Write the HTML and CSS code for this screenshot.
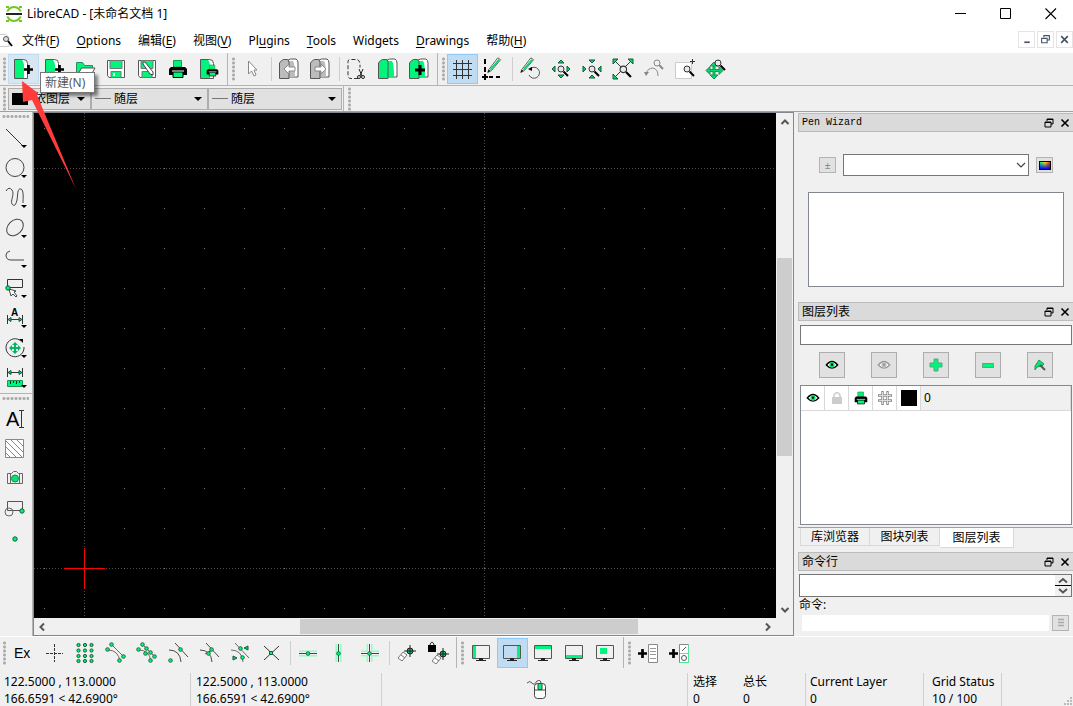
FILE: index.html
```html
<!DOCTYPE html>
<html lang="zh-CN">
<head>
<meta charset="utf-8">
<title>LibreCAD - [未命名文档 1]</title>
<link rel="stylesheet" href="styles.css">
</head>
<body>
<svg class="defs" aria-hidden="true">
  <defs>
    <symbol id="plus" viewBox="0 0 10 10"><path d="M3.500 0h3v3.500H10v3H6.500V10h-3V6.500H0v-3h3.500z"/></symbol>
    <symbol id="page" viewBox="0 0 24 24"><path d="M3.500 2.500h9q4 0 4 4v15h-13z" fill="#fff" stroke="#555"/><path d="M4 3h7q2 2 2 5v13H4z" fill="#00f57a"/></symbol>
    <symbol id="new" viewBox="0 0 24 24"><use href="#page" width="24" height="24"/><use href="#plus" x="13" y="8" width="9" height="9"/></symbol>
    <symbol id="lens" viewBox="0 0 12 12"><path d="M6.500 6.500l4.500 4.500" stroke="#000" stroke-width="2"/><circle cx="4" cy="4" r="3" fill="#e8e8e8" stroke="#333"/></symbol>
    <symbol id="pencil" viewBox="0 0 24 24"><path d="M4 15L14 2l3 2L7 16l-4 2z" fill="#fff" stroke="#555"/><path d="M6 15L15.500 4" stroke="#00d870" stroke-width="2"/><path d="M3 18l1-3 2 1z"/></symbol>
    <symbol id="eye" viewBox="0 0 16 12"><path d="M1.500 6q6.500-8 13 0q-6.500 7-13 0z" fill="#fff" stroke="currentColor" stroke-width="1.500"/><circle cx="8" cy="5.700" r="3" class="iris"/><circle cx="8" cy="5.700" r="1.300" fill="currentColor"/></symbol>
    <symbol id="printer" viewBox="0 0 20 20"><path d="M5.500 8V1.500h8V8z" fill="#00f57a" stroke="#159958"/><path d="M3 8h14l2 2v6H1v-6z"/><path d="M5 13h10v5.500H5z" fill="#00f57a" stroke="#000"/><path d="M4 12h12" stroke="#fff"/></symbol>
    <symbol id="monitor" viewBox="0 0 24 24"><path d="M3.500 4.500h17v13h-17z" fill="none" stroke="#555"/><path d="M10 17h4v2h3v1H7v-1h3z" fill="#222"/></symbol>
    <symbol id="floaticon" viewBox="0 0 10 10"><path d="M3 3V1h6v5H7M1 4h6v5H1zM1 4.500h6M3 1.500h6" fill="none" stroke="#000"/></symbol>
    <symbol id="closeicon" viewBox="0 0 10 10"><path d="M1.500 1.500l7 7m0-7l-7 7" stroke="#000" stroke-width="1.600"/></symbol>
    <symbol id="lib" viewBox="0 0 24 24"><path d="M9 4q4-3 10-2 2 1 2 4v14h-9z" fill="#fff" stroke="#555"/><path d="M12 4h4q2 2 2 16h-6z" class="cover"/><path d="M2.500 6q2-3 4-3.500H10q2 0 2 3v16H2.500z" class="cover" stroke="#555"/></symbol>
    <symbol id="dot" viewBox="0 0 6 6"><circle cx="3" cy="3" r="2.200" fill="#00f57a" stroke="#145c38"/></symbol>
    <symbol id="mag" viewBox="0 0 12 12"><path d="M1 9l5-6 4 3-5 6z" fill="#fff" stroke="#777"/><path d="M4 6l4 3" stroke="#777"/></symbol>
    <symbol id="snapmark" viewBox="0 0 12 12"><circle cx="6" cy="6" r="3" fill="#00c46a" stroke="#222"/><path d="M6 0v12M0 6h12" stroke="#222"/></symbol>
  </defs>
</svg>

<div class="window">
  <header class="titlebar">
    <svg class="logo" viewBox="0 0 18 18"><circle cx="9" cy="9" r="7" fill="none" stroke="#72c81e" stroke-width="2"/><path d="M1 9h16" stroke="#fff" stroke-width="5"/><path d="M1 9h16" stroke="#222" stroke-width="2"/><path d="M1 1h3v2H1zm13 0h3v2h-3zM1 15h3v2H1zm13 0h3v2h-3z" fill="#72c81e"/></svg>
    <h1>LibreCAD - [未命名文档 1]</h1>
    <div class="wincontrols">
      <button aria-label="最小化"><svg viewBox="0 0 12 12"><path d="M0 5.500h11" stroke="#000"/></svg></button>
      <button aria-label="最大化"><svg viewBox="0 0 12 12"><path d="M.5.500h10v10H.5z" fill="none" stroke="#000"/></svg></button>
      <button aria-label="关闭"><svg viewBox="0 0 12 12"><path d="M.5.500l10.500 10.500m0-10.500L.5 11" stroke="#000" stroke-width="1.100"/></svg></button>
    </div>
  </header>

  <nav class="menubar">
    <svg class="docicon" viewBox="0 0 14 16"><path d="M0 1.500h6l3 3v9H0" fill="#fff" stroke="#ccc"/><circle cx="6" cy="6" r="2.500" fill="#ddd" stroke="#555"/><path d="M8 8l4 5" stroke="#000" stroke-width="2"/></svg>
    <button>文件(<u>F</u>)</button><button><u>O</u>ptions</button><button>编辑(<u>E</u>)</button><button>视图(<u>V</u>)</button><button>Pl<u>u</u>gins</button><button><u>T</u>ools</button><button>Widgets</button><button><u>D</u>rawings</button><button>帮助(<u>H</u>)</button>
    <div class="mdi">
      <button aria-label="最小化文档"><svg viewBox="0 0 10 10"><path d="M3 7.500h5" stroke="#456" stroke-width="1.500"/></svg></button>
      <button aria-label="还原文档"><svg viewBox="0 0 10 10"><path d="M3.500 3V1.500h5v4H7M1.500 4h5v4h-5z" fill="none" stroke="#456"/></svg></button>
      <button aria-label="关闭文档"><svg viewBox="0 0 10 10"><path d="M2 2l6 6m0-6L2 8" stroke="#456" stroke-width="1.500"/></svg></button>
    </div>
  </nav>

  <div class="toolbar main-tools">
    <i class="grip"></i>
    <div class="newwrap">
      <button class="tool hover" aria-label="新建"><svg viewBox="0 0 24 24"><use href="#new"/></svg></button>
      <div class="tooltip" role="tooltip">新建(N)</div>
      <svg class="pointer-arrow" viewBox="0 0 56 110"><path d="M0 0L16 12l-1 2L54 108 10 19 1 21z" fill="#ff3b3b"/></svg>
    </div>
    <button class="tool" aria-label="从模板新建"><svg viewBox="0 0 24 24"><use href="#new"/></svg></button>
    <button class="tool" aria-label="打开"><svg viewBox="0 0 24 24"><path d="M3.500 20V5.500h6l2 3h8V11" fill="#00f57a" stroke="#2a8a5a"/><path d="M3.500 20l5-9H22l-5 9z" fill="#fff" stroke="#555"/></svg></button>
    <button class="tool" aria-label="保存"><svg viewBox="0 0 24 24"><path d="M3.500 3.500h17v17H5l-1.500-2z" fill="#fff" stroke="#555"/><path d="M6 3.500h12v8H6z" fill="#00f57a" stroke="#777"/><path d="M7 14.500h10v6H7z" fill="#00f57a" stroke="#777"/><path d="M9 16h2v3H9z" fill="#fff"/></svg></button>
    <button class="tool" aria-label="另存为"><svg viewBox="0 0 24 24"><path d="M3.500 3.500h17v17H5l-1.500-2z" fill="#fff" stroke="#555"/><path d="M6 3.500h12v8H6zM7 14.500h10v6H7z" fill="#00f57a" stroke="#777"/><path d="M8 5l2 0 8 10v3l-3-1L8 7z" fill="#fff" stroke="#444"/></svg></button>
    <button class="tool" aria-label="打印"><svg viewBox="0 0 24 24"><use href="#printer" x="2" y="2" width="20" height="20"/></svg></button>
    <button class="tool" aria-label="打印预览"><svg viewBox="0 0 24 24"><use href="#page"/><use href="#printer" x="9" y="7" width="13" height="13"/></svg></button>
    <i class="edge"></i><i class="grip"></i>
    <button class="tool" aria-label="选择"><svg viewBox="0 0 24 24"><path d="M8.500 4v13l3-3 2.500 5 2-1-2-5h3z" fill="#fff" stroke="#888"/></svg></button>
    <i class="sep"></i>
    <button class="tool muted" aria-label="撤销"><svg viewBox="0 0 24 24"><use href="#lib"/><path d="M7 12l5-5v3h6v4h-6v3z" fill="#fff" stroke="#888"/></svg></button>
    <button class="tool muted" aria-label="重做"><svg viewBox="0 0 24 24"><use href="#lib"/><path d="M18 12l-5-5v3H7v4h6v3z" fill="#fff" stroke="#888"/></svg></button>
    <i class="sep"></i>
    <button class="tool" aria-label="剪切"><svg viewBox="0 0 24 24"><path d="M13 21.500H6q-3 0-3-3v-14q0-2 2-2h7q3 1 3 5v3" fill="none" stroke="#333" stroke-dasharray="4 2"/><path d="M14 12l3 7m1-7l-3 7" stroke="#222"/><circle cx="14" cy="20" r="1.500" fill="none" stroke="#222"/><circle cx="18" cy="20" r="1.500" fill="none" stroke="#222"/></svg></button>
    <button class="tool" aria-label="复制"><svg viewBox="0 0 24 24"><use href="#lib"/></svg></button>
    <button class="tool" aria-label="粘贴"><svg viewBox="0 0 24 24"><use href="#lib"/><use href="#plus" x="8" y="8" width="10" height="10"/></svg></button>
    <i class="edge"></i><i class="grip"></i>
    <button class="tool on" aria-label="网格"><svg viewBox="0 0 24 24"><path d="M6.500 3v19m6-19v19m6-19v19M3 6.500h19m-19 6h19m-19 6h19" stroke="#333"/></svg></button>
    <button class="tool" aria-label="草图模式"><svg viewBox="0 0 24 24"><path d="M4 2v14" stroke="#000" stroke-width="2" stroke-dasharray="5 3"/><path d="M8 20h14" stroke="#000" stroke-width="2" stroke-dasharray="4 3"/><path d="M4 17v6m-3-3h6" stroke="#000" stroke-width="2"/><use href="#pencil" x="4" y="-1" width="22" height="22"/></svg></button>
    <i class="sep"></i>
    <button class="tool" aria-label="重绘"><svg viewBox="0 0 24 24"><path d="M12 12a5.500 5.500 0 1 1-1 6" fill="none" stroke="#555"/><path d="M10 12l4-2v4z"/><use href="#pencil" y="-1" width="22" height="22"/></svg></button>
    <button class="tool" aria-label="放大"><svg viewBox="0 0 24 24"><path d="M12 3l3 3H9zM12 21l-3-3h6zM3 12l3-3v6zM21 12l-3-3v6z" class="gr"/><use href="#lens" x="8" y="8" width="12" height="12"/></svg></button>
    <button class="tool" aria-label="缩小"><svg viewBox="0 0 24 24"><path d="M12 6l3-3H9zM12 18l-3 3h6zM6 12L3 9v6zM18 12l3-3v6z" class="gr"/><use href="#lens" x="8" y="8" width="12" height="12"/></svg></button>
    <button class="tool" aria-label="自动缩放"><svg viewBox="0 0 24 24"><path d="M4 4l16 16M20 4L4 20" stroke="#333"/><path d="M2 2h5L2 7zM22 2v5l-5-5zM2 22v-5l5 5z" class="gr"/><use href="#lens" x="8" y="8" width="13" height="13"/></svg></button>
    <button class="tool" aria-label="上一视图"><svg viewBox="0 0 24 24"><path d="M4 18q1-7 7-7 5 1 5 8" fill="none" stroke="#888"/><path d="M2 15h5l-3 4z" fill="#888"/><circle cx="15" cy="6" r="3" fill="none" stroke="#888"/><path d="M17 8l4 4" stroke="#888" stroke-width="2"/></svg></button>
    <button class="tool" aria-label="窗口缩放"><svg viewBox="0 0 24 24"><path d="M2.500 5.500h16v16h-16z" fill="#fff" stroke="#ccc"/><use href="#lens" x="10" y="8" width="12" height="12"/><path d="M19.500 2v5m-2.500-2.500h5" stroke="#333"/></svg></button>
    <button class="tool" aria-label="平移"><svg viewBox="0 0 24 24"><path d="M10 6v15M3 13.500h15" stroke="#159958" stroke-width="3"/><path d="M10 5l4 4H6zM10 22l-4-4h8zM2 13.500l4-4v8zM19 13.500l-4-4v8z" fill="#00d870" stroke="#228855"/><path d="M10 7v13M4 13.500h12" stroke="#00d870"/><use href="#lens" x="10" y="2" width="12" height="12"/></svg></button>
  </div>

  <div class="toolbar pen-tools">
    <i class="grip"></i>
    <label class="combo pen-color"><select aria-label="颜色"><option>依图层</option></select></label>
    <label class="combo pen-width"><select aria-label="线宽"><option>随层</option></select></label>
    <label class="combo pen-type"><select aria-label="线型"><option>随层</option></select></label>
    <i class="edge"></i><i class="grip"></i>
  </div>

  <main class="workspace">
    <aside class="sidebar">
      <i class="hgrip"></i>
      <button class="side menu" aria-label="直线"><svg viewBox="0 0 24 24"><path d="M3 3l17 17" stroke="#333"/></svg></button>
      <button class="side menu" aria-label="圆"><svg viewBox="0 0 24 24"><circle cx="12" cy="11.500" r="9" fill="none" stroke="#444"/></svg></button>
      <button class="side menu" aria-label="曲线"><svg viewBox="0 0 24 24"><path d="M3 5q3-5 6-1c3 4-2 11 0 14s4 1 5-4 0-12 4-11c3 1 2 10 2 14" fill="none" stroke="#444"/></svg></button>
      <button class="side menu" aria-label="椭圆"><svg viewBox="0 0 24 24"><ellipse cx="12" cy="11.500" rx="9.500" ry="7" transform="rotate(-45 12 11.500)" fill="none" stroke="#444"/></svg></button>
      <button class="side menu" aria-label="多段线"><svg viewBox="0 0 24 24"><path d="M7 5Q3 6 3 9q0 5 5 5h13" fill="none" stroke="#444"/></svg></button>
      <button class="side menu" aria-label="选择"><svg viewBox="0 0 24 24"><path d="M4.500 3.500h15v8h-15z" fill="none" stroke="#333"/><path d="M6 13l2 7 2-2 3 3 1-1-3-4 2-1z" fill="#fff" stroke="#444"/><use href="#dot" x="2" y="9" width="6" height="6"/></svg></button>
      <button class="side menu" aria-label="标注"><svg viewBox="0 0 24 24"><text x="8" y="10" class="dimtext">A</text><path d="M4.500 9v9m15-9v9M6 13.500h12" stroke="#333"/><path d="M5 13.500l3-2v4zM19 13.500l-3-2v4z" class="gr"/></svg></button>
      <button class="side menu" aria-label="修改"><svg viewBox="0 0 24 24"><path d="M18 5A9 9 0 1 0 21 11" fill="none" stroke="#333"/><path d="M16 3l4 0v4z"/><path d="M12 8v8m-4-4h8" stroke="#00b863" stroke-width="2"/><path d="M12 6l3 3H9zM12 18l-3-3h6zM6 12l3-3v6zM18 12l-3-3v6z" fill="#00b863"/></svg></button>
      <button class="side menu" aria-label="测量"><svg viewBox="0 0 24 24"><path d="M4.500 2v9m15-9v9M6 6.500h12" stroke="#333"/><path d="M5 6.500l3-2v4zM19 6.500l-3-2v4z" class="gr"/><path d="M4.500 14.500h15v6h-15z" fill="#00f57a" stroke="#159958"/><path d="M7.500 15v3m3-3v2m3-2v3m3-3v2" stroke="#222"/></svg></button>
      <i class="hedge"></i><i class="hgrip short"></i>
      <button class="side" aria-label="多行文本"><svg viewBox="0 0 24 24"><text x="3" y="19" class="mtext">A</text><path d="M16 3.500h5m-5 17h5m-2.500-17v17" fill="none" stroke="#333"/></svg></button>
      <button class="side" aria-label="填充"><svg viewBox="0 0 24 24"><path d="M2.500 2.500h18v18h-18z" fill="#fff" stroke="#888"/><path d="M8 3l12 12M14 3l6 6M3 4l16 16M3 10l10 10M3 16l4 4" stroke="#888"/></svg></button>
      <button class="side" aria-label="图像"><svg viewBox="0 0 24 24"><path d="M4.500 6.500h4l2-2h3l2 2h4v10h-15zM7.500 7v9m9-9v9" fill="none" stroke="#666"/><circle cx="12" cy="11.500" r="3.500" fill="#00e873" stroke="#178552"/></svg></button>
      <button class="side" aria-label="创建块"><svg viewBox="0 0 24 24"><path d="M4.500 4.500h15v9h-15z" fill="none" stroke="#555"/><circle cx="6" cy="15" r="4" fill="none" stroke="#666"/><use href="#dot" x="16" y="11" width="6" height="6"/></svg></button>
      <button class="side" aria-label="点"><svg viewBox="0 0 24 24"><use href="#dot" x="9" y="9" width="6" height="6"/></svg></button>
    </aside>

    <section class="viewport">
      <svg class="drawing" aria-label="绘图区">
        <defs>
          <pattern id="points" width="40" height="40" patternUnits="userSpaceOnUse"><path d="M10 15h1v1h-1z" fill="#777"/></pattern>
          <pattern id="meta" width="400" height="400" patternUnits="userSpaceOnUse"><path d="M50.500 0v400M0 55.500h400" stroke="#4a4a4a" stroke-dasharray="1 2"/></pattern>
        </defs>
        <rect width="100%" height="100%" fill="#000"/>
        <rect width="100%" height="100%" fill="url(#meta)"/>
        <rect width="100%" height="100%" fill="url(#points)"/>
        <path d="M30 455.500h41M50.500 435v41" stroke="#f00"/>
      </svg>
      <div class="vscroll">
        <button aria-label="向上"><svg viewBox="0 0 10 10"><path d="M1.500 7L5 3.500 8.500 7" class="chev"/></svg></button>
        <i class="before"></i><i class="thumb"></i><i class="after"></i>
        <button aria-label="向下"><svg viewBox="0 0 10 10"><path d="M1.500 3L5 6.500 8.500 3" class="chev"/></svg></button>
      </div>
      <div class="hscroll">
        <button aria-label="向左"><svg viewBox="0 0 10 10"><path d="M7 1.500L3.500 5 7 8.500" class="chev"/></svg></button>
        <i class="before"></i><i class="thumb"></i><i class="after"></i>
        <button aria-label="向右"><svg viewBox="0 0 10 10"><path d="M3 1.500L6.500 5 3 8.500" class="chev"/></svg></button>
      </div>
    </section>

    <aside class="docks">
      <section class="dock pen-wizard">
        <header><h2 class="mono">Pen Wizard</h2><button aria-label="浮动"><svg viewBox="0 0 10 10"><use href="#floaticon"/></svg></button><button aria-label="关闭"><svg viewBox="0 0 10 10"><use href="#closeicon"/></svg></button></header>
        <div class="wizard-row">
          <button class="mini" aria-label="添加">±</button>
          <label class="wizard-combo"><select aria-label="收藏颜色"><option></option></select><svg viewBox="0 0 10 10"><path d="M1 3l4 4 4-4" fill="none" stroke="#444" stroke-width="1.200"/></svg></label>
          <button class="mini" aria-label="选择颜色"><i class="spectrum"></i></button>
        </div>
        <div class="swatches"></div>
      </section>

      <section class="dock layers">
        <header><h2>图层列表</h2><button aria-label="浮动"><svg viewBox="0 0 10 10"><use href="#floaticon"/></svg></button><button aria-label="关闭"><svg viewBox="0 0 10 10"><use href="#closeicon"/></svg></button></header>
        <input class="filter" type="text" aria-label="图层过滤">
        <div class="layer-actions">
          <button aria-label="全部显示"><svg viewBox="0 0 16 16"><use href="#eye" x="1" y="2" width="14" height="12"/></svg></button>
          <button class="muted" aria-label="全部隐藏"><svg viewBox="0 0 16 16"><use href="#eye" x="1" y="2" width="14" height="12"/></svg></button>
          <button aria-label="添加图层"><svg viewBox="0 0 16 16"><path d="M6 2h4v4h4v4h-4v4H6v-4H2V6h4z" fill="#00f57a" stroke="#55a87f"/></svg></button>
          <button aria-label="删除图层"><svg viewBox="0 0 16 16"><path d="M2.500 6.500h11v4h-11z" fill="#00f57a" stroke="#55a87f"/></svg></button>
          <button aria-label="修改图层"><svg viewBox="0 0 16 16"><path d="M3 9l4-6 5 4-2 2-5 1-2 3z" fill="#00e873" stroke="#368a60"/><path d="M8 8l5 5" stroke="#555" stroke-width="2"/></svg></button>
        </div>
        <div class="layer-list">
          <table><tbody><tr>
            <td><svg viewBox="0 0 16 16"><use href="#eye" x="1" y="2" width="14" height="12"/></svg></td>
            <td><svg viewBox="0 0 16 16"><path d="M5 8V5q3-5 6 0v3" fill="none" stroke="#ccc" stroke-width="1.500"/><path d="M3 7h10v7H3z" fill="#ccc"/></svg></td>
            <td><svg viewBox="0 0 16 16"><use href="#printer" x="1" y="1" width="14" height="14"/></svg></td>
            <td><svg viewBox="0 0 16 16"><path d="M5.500 1v14m5-14v14M1 5.500h14m-14 5h14" stroke="#888" stroke-width="2.400"/><path d="M5.500 2v12m5-12v12M2 5.500h12m-12 5h12" stroke="#ddd"/></svg></td>
            <td><svg viewBox="0 0 16 16"><path d="M0 0h16v16H0z"/></svg></td>
            <td class="layer-name">0</td>
          </tr></tbody></table>
        </div>
        <div class="tabs" role="tablist">
          <button role="tab">库浏览器</button><button role="tab">图块列表</button><button role="tab" class="active" aria-selected="true">图层列表</button>
        </div>
      </section>

      <section class="dock command">
        <header><h2>命令行</h2><button aria-label="浮动"><svg viewBox="0 0 10 10"><use href="#floaticon"/></svg></button><button aria-label="关闭"><svg viewBox="0 0 10 10"><use href="#closeicon"/></svg></button></header>
        <div class="history">
          <textarea aria-label="命令历史" readonly></textarea>
          <div class="spin"><button aria-label="向上"><svg viewBox="0 0 10 10"><path d="M1 7.500L5 4l4 3.500" class="chev"/></svg></button><button aria-label="向下"><svg viewBox="0 0 10 10"><path d="M1 3l4 3.500L9 3" class="chev"/></svg></button></div>
        </div>
        <label for="cmd">命令:</label>
        <div class="cmd-row"><input id="cmd" type="text"><button class="mini" aria-label="选项"><svg viewBox="0 0 10 10"><path d="M2 1.500h6m-6 3h6m-6 3h6" stroke="#aaa" stroke-width="1.500"/></svg></button></div>
      </section>
    </aside>
  </main>

  <div class="toolbar snap-tools">
    <i class="grip"></i>
    <button class="tool ex">Ex</button>
    <button class="tool" aria-label="自由捕捉"><svg viewBox="0 0 24 24"><path d="M12.500 3v18M4 12.500h17" stroke="#333" stroke-dasharray="3 1"/></svg></button>
    <button class="tool" aria-label="捕捉网格"><svg viewBox="0 0 24 24"><g fill="#00f57a" stroke="#145c38"><circle cx="5.500" cy="4" r="1.600"/><circle cx="12" cy="4" r="1.600"/><circle cx="18.500" cy="4" r="1.600"/><circle cx="5.500" cy="9.500" r="1.600"/><circle cx="12" cy="9.500" r="1.600"/><circle cx="18.500" cy="9.500" r="1.600"/><circle cx="5.500" cy="15" r="1.600"/><circle cx="12" cy="15" r="1.600"/><circle cx="18.500" cy="15" r="1.600"/><circle cx="5.500" cy="20" r="1.600"/><circle cx="12" cy="20" r="1.600"/><circle cx="18.500" cy="20" r="1.600"/></g></svg></button>
    <button class="tool" aria-label="捕捉端点"><svg viewBox="0 0 24 24"><path d="M8 4l12 12M4 9q10 0 12 11" fill="none" stroke="#766"/><use href="#dot" x="5" y="1" width="5" height="5"/><use href="#dot" x="17" y="13" width="5" height="5"/><use href="#dot" x="1" y="6" width="5" height="5"/><use href="#dot" x="13" y="17" width="5" height="5"/></svg></button>
    <button class="tool" aria-label="捕捉实体"><svg viewBox="0 0 24 24"><path d="M8 4l12 12M4 9q10 0 12 11" fill="none" stroke="#766"/><use href="#dot" x="5" y="1" width="5" height="5"/><use href="#dot" x="17" y="13" width="5" height="5"/><use href="#dot" x="1" y="6" width="5" height="5"/><use href="#dot" x="13" y="17" width="5" height="5"/><use href="#dot" x="9" y="5" width="5" height="5"/><use href="#dot" x="13" y="9" width="5" height="5"/><use href="#dot" x="8" y="10" width="5" height="5"/></svg></button>
    <button class="tool" aria-label="捕捉中心"><svg viewBox="0 0 24 24"><path d="M9 2l13 14M3 9q11 0 12 12" fill="none" stroke="#544"/><use href="#dot" x="12" y="6" width="5" height="5"/><use href="#dot" x="2" y="17" width="5" height="5"/></svg></button>
    <button class="tool" aria-label="捕捉中点"><svg viewBox="0 0 24 24"><path d="M9 2l13 14M3 9q11 0 12 12M8 13l7-4" fill="none" stroke="#544"/><use href="#dot" x="12" y="6" width="5" height="5"/><use href="#dot" x="9" y="10" width="5" height="5"/></svg></button>
    <button class="tool" aria-label="捕捉距离"><svg viewBox="0 0 24 24"><path d="M7 2l14 15M3 9q11 0 12 12" fill="none" stroke="#766"/><use href="#dot" x="10" y="5" width="5" height="5"/><use href="#dot" x="12" y="14" width="5" height="5"/><path d="M16 7l4-2v4zM9 17l-4-2v4z" class="gr"/></svg></button>
    <button class="tool" aria-label="捕捉交点"><svg viewBox="0 0 24 24"><path d="M5 5l15 14M20 5L5 19" stroke="#333"/><path d="M10.500 10.500h3v3h-3z" fill="#00f57a" stroke="#145c38"/></svg></button>
    <i class="sep"></i>
    <button class="tool" aria-label="水平限制"><svg viewBox="0 0 24 24"><path d="M3 12.500h18" stroke="#8effc5" stroke-width="6"/><path d="M3 12.500h18" stroke="#f0f0f0" stroke-width="3"/><path d="M3 12.500h18" stroke="#444"/><use href="#dot" x="9.500" y="10" width="5" height="5"/></svg></button>
    <button class="tool" aria-label="垂直限制"><svg viewBox="0 0 24 24"><path d="M11.500 3v18" stroke="#8effc5" stroke-width="6"/><path d="M11.500 3v18" stroke="#f0f0f0" stroke-width="3"/><path d="M11.500 3v18" stroke="#444"/><use href="#dot" x="9" y="10" width="5" height="5"/></svg></button>
    <button class="tool" aria-label="正交限制"><svg viewBox="0 0 24 24"><path d="M11.500 3v18M3 12.500h18" stroke="#8effc5" stroke-width="6"/><path d="M11.500 3v18M3 12.500h18" stroke="#f0f0f0" stroke-width="3"/><path d="M11.500 3v18M3 12.500h18" stroke="#444"/><use href="#dot" x="9" y="10" width="5" height="5"/></svg></button>
    <i class="sep"></i>
    <button class="tool" aria-label="设置相对零点"><svg viewBox="0 0 24 24"><use href="#mag" x="2" y="8" width="12" height="12"/><use href="#snapmark" x="9" y="4" width="12" height="12"/></svg></button>
    <button class="tool" aria-label="锁定相对零点"><svg viewBox="0 0 24 24"><path d="M3.500 5q2.500-8 5 0" fill="none" stroke="#333"/><path d="M2 4h8v7H2z"/><use href="#mag" x="5" y="11" width="12" height="12"/><use href="#snapmark" x="11" y="7" width="12" height="12"/></svg></button>
    <i class="edge"></i><i class="grip"></i>
    <button class="tool" aria-label="左停靠区"><svg viewBox="0 0 24 24"><path d="M4 5h3v12H4z" fill="#00f57a"/><use href="#monitor"/></svg></button>
    <button class="tool on" aria-label="右停靠区"><svg viewBox="0 0 24 24"><path d="M17 5h3v12h-3z" fill="#00f57a"/><use href="#monitor"/></svg></button>
    <button class="tool" aria-label="上停靠区"><svg viewBox="0 0 24 24"><path d="M4 5h16v3H4z" fill="#00f57a"/><use href="#monitor"/></svg></button>
    <button class="tool" aria-label="下停靠区"><svg viewBox="0 0 24 24"><path d="M4 14h16v3H4z" fill="#00f57a"/><use href="#monitor"/></svg></button>
    <button class="tool" aria-label="浮动停靠"><svg viewBox="0 0 24 24"><path d="M7 7h7v6H7z" fill="#00f57a"/><use href="#monitor"/></svg></button>
    <i class="edge"></i><i class="grip"></i>
    <button class="tool" aria-label="添加菜单"><svg viewBox="0 0 24 24"><use href="#plus" x="2" y="8" width="9" height="9"/><path d="M12.500 3.500h9v18h-9z" fill="#fff" stroke="#888"/><path d="M14 7.500h6m-6 3h6m-6 3h6m-6 4h6" stroke="#999"/></svg></button>
    <button class="tool" aria-label="添加工具栏"><svg viewBox="0 0 24 24"><use href="#plus" x="2" y="8" width="9" height="9"/><path d="M12.500 3.500h9v18h-9zM12 12.500h10" fill="#fff" stroke="#888"/><path d="M21.500 4v17.500H13M13 12.500h8" fill="none" stroke="#54e69c"/><path d="M15 10l4-4" stroke="#555"/><circle cx="17" cy="17" r="2.500" fill="none" stroke="#555"/></svg></button>
  </div>

  <footer class="status">
    <div class="coord">122.5000 , 113.0000<br>166.6591 &lt; 42.6900°</div>
    <div class="coord second">122.5000 , 113.0000<br>166.6591 &lt; 42.6900°</div>
    <div class="mouse"><svg viewBox="0 0 22 22"><path d="M1 5q3-3 5 0t5-2q4-2 4 3" fill="none" stroke="#555"/><rect x="8.500" y="5.500" width="11" height="15" rx="3" fill="#fff" stroke="#444"/><path d="M12 5.500h4v6h-4z" fill="#00f57a" stroke="#444"/><path d="M8.500 12h11" stroke="#444"/></svg></div>
    <div class="selection"><span>选择<br>0</span><span>总长<br>0</span></div>
    <div class="layer-status">Current Layer<br>0</div>
    <div class="grid-status">Grid Status<br>10 / 100</div>
    <svg class="sizegrip" viewBox="0 0 10 10"><path d="M7 1h2v2H7zM4 4h2v2H4zM7 4h2v2H7zM1 7h2v2H1zM4 7h2v2H4zM7 7h2v2H7z" fill="#bbb"/></svg>
  </footer>
</div>
</body>
</html>
```
FILE: styles.css
```css
* { box-sizing: border-box; }
body, h1, h2 { margin: 0; }
body { font: 12px/16px "Noto Sans", "Noto Sans CJK SC", sans-serif; color: #000; background: #f0f0f0; }
button, input, select, textarea { font: inherit; color: inherit; margin: 0; padding: 0; border: 0; border-radius: 0; background: none; outline: 0; }
h1, h2 { font-size: 12px; font-weight: 400; }
svg { display: block; flex: none; }
i { display: block; flex: none; }
.defs { position: absolute; width: 0; height: 0; }
.window { display: flex; flex-direction: column; height: 100vh; overflow: hidden; }

.gr { fill: #00d870; stroke: #17593a; }
.cover { fill: var(--cover, #00f57a); }
.iris { fill: var(--iris, #00e070); }
.muted { color: #999; --cover: #bcbcbc; --iris: #bcbcbc; }
.chev { fill: none; stroke: #555; stroke-width: 2; }

.titlebar { display: flex; align-items: center; height: 28px; background: #fff; padding-left: 5px; flex: none; }
.logo { width: 18px; height: 18px; margin-right: 4px; }
.wincontrols { display: flex; margin-left: auto; }
.wincontrols button { width: 45px; height: 28px; display: grid; place-items: center; }
.wincontrols svg { width: 12px; height: 12px; }

.menubar { display: flex; align-items: center; height: 25px; background: #fff; flex: none; }
.docicon { width: 14px; height: 16px; }
.menubar > button { padding: 0 9px 0 8px; white-space: nowrap; }
.menubar u { text-underline-offset: 2px; }
.mdi { display: flex; gap: 2px; margin-left: auto; align-self: flex-start; padding-top: 3px; }
.mdi button { width: 17px; height: 17px; border: 1px solid #e4e4e4; display: grid; place-items: center; }
.mdi svg { width: 11px; height: 11px; }

.toolbar { display: flex; align-items: center; flex: none; background: #f0f0f0; }
.main-tools { height: 33px; border-bottom: 1px solid #b4b4b4; }
.pen-tools { height: 26px; border-bottom: 1px solid #a0a0a0; }
.snap-tools { height: 34px; padding-bottom: 2px; border-top: 1px solid #fff; }
.grip { width: 3px; height: 24px; margin: 0 2px 0 3px; background: radial-gradient(circle, #aaa 1px, transparent 2px) 0 0 / 3px 4px; }
.edge { align-self: stretch; width: 1px; margin-left: 2px; margin-right: 1px; background: #b4b4b4; }
.sep { width: 1px; height: 24px; margin: 0 2px 0 3px; background: #cfcfcf; }
.tool { display: grid; place-items: center start; width: 31px; height: 30px; padding-left: 2px; flex: none; border: 1px solid transparent; }
.tool svg { width: 24px; height: 24px; }
.tool.hover { background: #d8e6f2; border-color: #c0dcf3; }
.tool.on { background: #c0dcf3; border-color: #90c8f6; }
.ex { font: 14px/20px "Liberation Sans", sans-serif; padding-left: 5px; }
.newwrap { position: relative; }
.tooltip { position: absolute; z-index: 5; left: 32px; top: 18px; width: 55px; height: 21px; padding-left: 4px; line-height: 19px; color: #575757; background: #fff; border: 1px solid #767676; box-shadow: 3px 3px 3px #0007; white-space: nowrap; }
.pointer-arrow { position: absolute; z-index: 6; left: 14px; top: 27px; width: 56px; height: 110px; pointer-events: none; }

.combo { position: relative; height: 22px; }
.combo select { appearance: none; width: 100%; height: 22px; border: 1px solid #adadad; background: #e1e1e1; padding-left: 22px; }
.combo::before { content: ""; position: absolute; left: 4px; top: 10px; width: 16px; height: 1px; background: #777; }
.combo::after { content: ""; position: absolute; right: 6px; top: 9px; border: 4px solid transparent; border-top-color: #000; border-bottom: 0; }
.pen-color { width: 83px; }
.pen-color select { padding-left: 25px; }
.pen-color::before { top: 5px; height: 12px; background: #000; }
.pen-width { width: 117px; }
.pen-type { width: 134px; }
.pen-tools .edge { margin-left: 1px; }
.pen-tools .edge + .grip { margin-left: 3px; }

.workspace { display: flex; flex: 1; min-height: 0; }
.sidebar { width: 33px; flex: none; border-right: 1px solid #b4b4b4; }
.hgrip { width: 27px; height: 3px; margin: 3px 2px 5px; background: radial-gradient(circle, #aaa 1px, transparent 2px) 0 0 / 4px 3px; }
.hgrip.short { margin-bottom: 4px; }
.hedge { height: 1px; background: #b4b4b4; }
.side { position: relative; display: grid; place-items: center; width: 30px; height: 30px; }
.side svg { width: 24px; height: 24px; }
.menu::after { content: ""; position: absolute; right: 3px; bottom: 5px; border: 3px solid transparent; border-top-color: #000; border-bottom: 0; }
.dimtext { font: bold 10px "Liberation Sans", sans-serif; }
.mtext { font: 20px "Liberation Sans", sans-serif; }

.viewport { flex: 1; min-width: 0; display: grid; grid-template: 1fr 17px / 1fr 17px; border: 1px solid #828790; }
.drawing { width: 100%; height: 100%; }
.vscroll, .hscroll { display: flex; background: #f0f0f0; }
.vscroll { flex-direction: column; padding: 1px 0 0 1px; }
.hscroll { padding: 1px 0; }
.vscroll button, .hscroll button { display: grid; place-items: center; width: 16px; height: 16px; flex: none; }
.vscroll svg, .hscroll svg { width: 10px; height: 10px; }
.thumb { background: #cdcdcd; }
.vscroll .thumb { width: 15px; }
.vscroll .before { flex: 128; }
.vscroll .thumb { flex: 198; }
.vscroll .after { flex: 146; }
.hscroll .before { flex: 250; }
.hscroll .thumb { flex: 338; }
.hscroll .after { flex: 122; }

.docks { width: 279px; flex: none; padding: 1px 0 5px 4px; display: flex; flex-direction: column; }
.dock header { display: flex; align-items: center; height: 19px; background: #dadada; border: 1px solid #bcbcbc; border-right: 0; padding-left: 3px; }
.dock h2 { flex: 1; }
.dock h2.mono { font: 10px/16px "Liberation Mono", monospace; }
.dock header button { width: 16px; height: 16px; display: grid; place-items: center; }
.dock header svg { width: 10px; height: 10px; }
.pen-wizard { height: 189px; flex: none; }
.wizard-row { display: flex; align-items: center; gap: 7px; padding: 22px 20px 16px 21px; }
.mini { width: 17px; height: 16px; flex: none; display: grid; place-items: center; border: 1px solid #b4b4b4; background: #e1e1e1; color: #888; font-size: 10px; line-height: 12px; }
.mini svg { width: 10px; height: 10px; }
.wizard-combo { position: relative; flex: 1; }
.wizard-combo select { display: block; appearance: none; width: 100%; height: 22px; border: 1px solid #767676; background: #fff; }
.wizard-combo svg { position: absolute; right: 3px; top: 6px; width: 10px; height: 10px; }
.spectrum { width: 12px; height: 9px; border: 1px solid #000; background: linear-gradient(transparent, #00f), linear-gradient(90deg, #0f6, #fe0 50%, #f20); }
.swatches { height: 95px; margin: 0 9px 0 10px; background: #fff; border: 1px solid #828790; }

.layers { display: flex; flex-direction: column; flex: 1; min-height: 0; }
.filter { height: 20px; margin: 4px 1px 7px 2px; border: 1px solid #767676; background: #fff; flex: none; }
.layer-actions { display: flex; justify-content: space-between; padding: 0 20px 7px 21px; }
.layer-actions button { width: 26px; height: 26px; display: grid; place-items: center; background: #e1e1e1; border: 1px solid #adadad; }
.layer-actions svg, .layer-list svg { width: 16px; height: 16px; margin: auto; }
.layer-list { flex: 1; min-height: 0; margin: 0 1px 2px 2px; background: #fff; border: 1px solid #828790; }
table { width: 100%; border-collapse: separate; border-spacing: 0; table-layout: fixed; }
td { width: 24px; height: 25px; padding: 0; border-right: 1px solid #d8d8d8; border-bottom: 1px solid #d8d8d8; background: #fff; }
.layer-name { width: auto; padding-left: 3px; background: #f0f0f0; }
.tabs { display: flex; align-items: flex-start; height: 25px; padding-left: 2px; border-top: 1px solid #a0a0a0; flex: none; }
.tabs button { height: 18px; width: 70px; border: 1px solid #d9d9d9; border-top: 0; border-left: 0; }
.tabs button:first-child { border-left: 1px solid #d9d9d9; }
.tabs .active { width: 74px; height: 20px; background: #fff; }
.command { flex: none; }
.history { display: flex; height: 23px; margin: 3px 1px 0; border: 1px solid #767676; background: #fff; }
.history textarea { flex: 1; min-width: 0; resize: none; overflow: hidden; }
.spin { width: 16px; background: #f0f0f0; }
.spin button { width: 16px; height: 10px; display: grid; place-items: center; }
.spin button:first-child { height: 11px; border-bottom: 1px solid #000; }
.spin svg { width: 10px; height: 10px; }
.command label { display: block; padding-left: 1px; height: 18px; line-height: 15px; }
.cmd-row { display: flex; gap: 3px; padding: 0 4px; }
.cmd-row input { flex: 1; min-width: 0; height: 16px; background: #fff; }

.status { position: relative; display: flex; height: 36px; flex: none; padding-top: 3px; line-height: 17px; }
.status > div { border-right: 1px solid #d0d0d0; white-space: nowrap; }
.coord { width: 191px; padding-left: 4px; }
.coord.second { padding-left: 5px; }
.status .mouse { flex: 1; display: grid; place-items: start center; padding-left: 4px; }
.mouse svg { width: 22px; height: 22px; margin-top: 5px; }
.selection { display: flex; gap: 26px; width: 118px; padding-left: 5px; }
.layer-status { width: 118px; padding-left: 4px; }
.grid-status { width: 78px; padding-left: 8px; margin-right: 71px; }
.sizegrip { position: absolute; right: 0; bottom: 0; width: 10px; height: 10px; }
```
